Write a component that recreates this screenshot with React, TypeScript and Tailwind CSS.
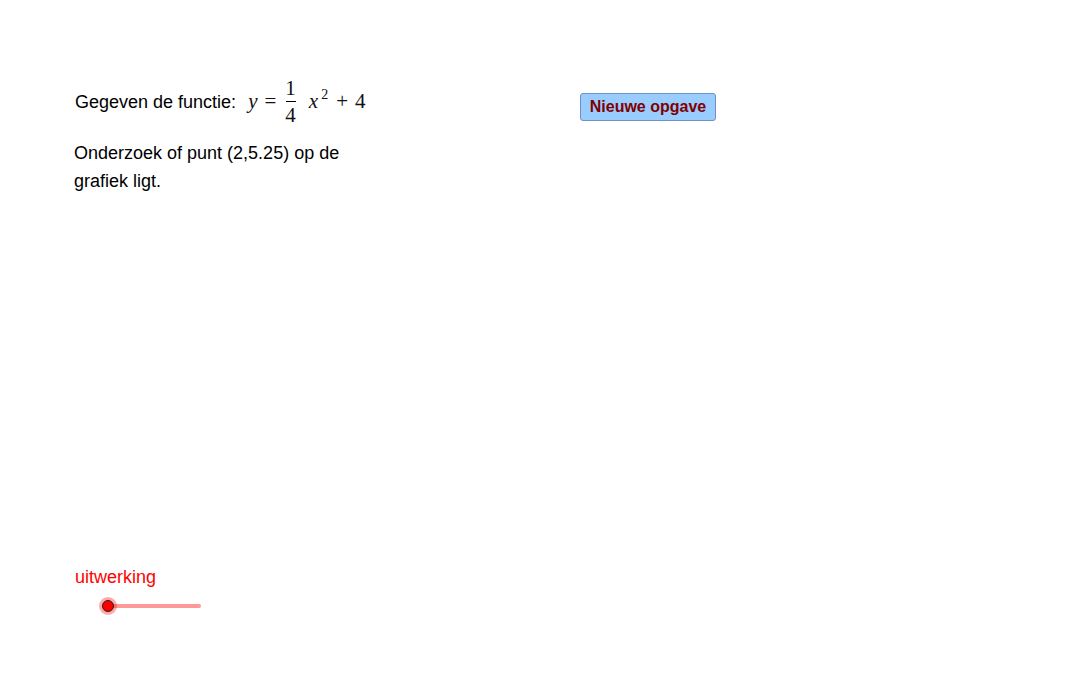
import React from "react"

const serif = { fontFamily: '"Liberation Serif", "Times New Roman", serif' }

export default function App() {
  return (
    <div className="relative w-[1074px] h-[685px] bg-white overflow-hidden" style={{ fontFamily: '"Liberation Sans", Arial, sans-serif' }}>
      {/* opgave */}
      <div className="absolute left-[75px] top-[78px] flex items-center text-[18px] text-black">
        <span>Gegeven de functie:</span>
        <span className="ml-[12px] flex items-center text-[21px] text-[#111]" style={serif}>
          <i>y</i>
          <span className="ml-[7px] mr-[9px]">=</span>
          <span className="inline-flex flex-col items-center leading-none text-[21px]">
            <span className="pb-[2px]">1</span>
            <span className="w-[10px] h-px bg-black"></span>
            <span className="pt-[3px]">4</span>
          </span>
          <span className="ml-[13px]">
            <i>x</i>
            <sup className="text-[14px] relative -top-[9px] ml-[3px]">2</sup>
          </span>
          <span className="ml-[8px] mr-[7px]">+</span>
          <span>4</span>
        </span>
      </div>

      <div className="absolute left-[74px] top-[139px] w-[285px] text-[18px] leading-[28px] text-black">
        Onderzoek of punt (2,5.25) op de grafiek ligt.
      </div>

      {/* knop */}
      <button className="absolute left-[580px] top-[93px] w-[136px] h-[28px] rounded-[3px] border border-[#7191c4] bg-[#99ccff] text-[16px] font-bold text-[#800000] flex items-center justify-center">
        Nieuwe opgave
      </button>

      {/* schuifregelaar */}
      <div className="absolute left-[75px] top-[564px] text-[18px] text-[#ff0000]">uitwerking</div>
      <div className="absolute left-[106px] top-[604px] w-[95px] h-[4px] rounded-full bg-[#ff9999]"></div>
      <div className="absolute left-[99px] top-[597px] w-[18px] h-[18px] rounded-full bg-[#ff000055] flex items-center justify-center">
        <div className="w-[12px] h-[12px] rounded-full bg-[#ff0000] border border-[#222]"></div>
      </div>
    </div>
  )
}
